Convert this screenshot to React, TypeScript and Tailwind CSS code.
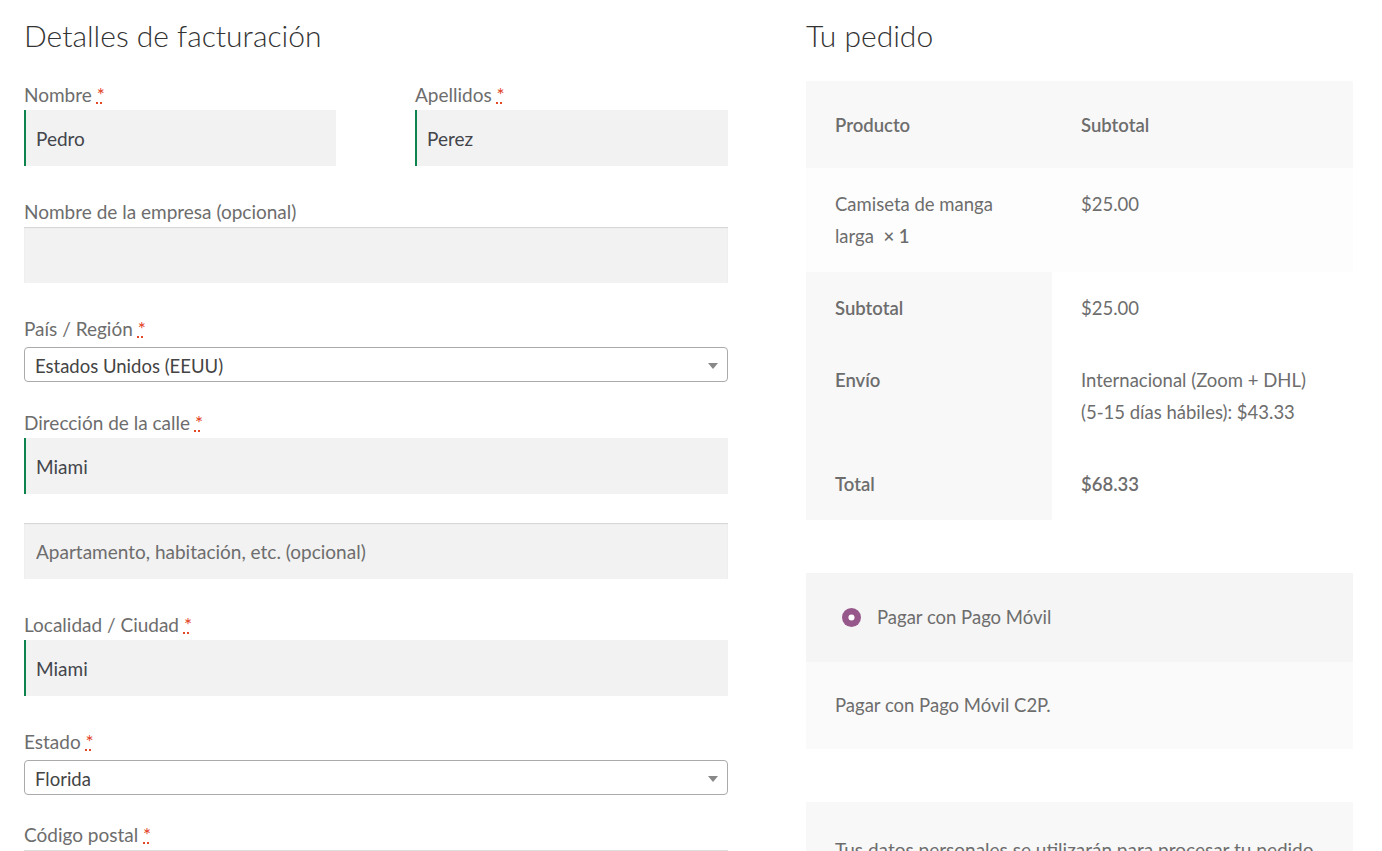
import React from "react"

function Req() {
  return (
    <abbr title="obligatorio" className="text-[#e2401c] [text-decoration-color:#e2401c]">
      *
    </abbr>
  )
}

function Label({ children, required = true }: { children: React.ReactNode; required?: boolean }) {
  return (
    <label className="block text-[19px] leading-[29px] text-[#6d6d6d]">
      {children} {required && <Req />}
    </label>
  )
}

function TextField({ value, placeholder, valid }: { value?: string; placeholder?: string; valid?: boolean }) {
  return (
    <input
      type="text"
      defaultValue={value}
      placeholder={placeholder}
      className={`block w-full h-[56px] bg-[#f2f2f2] pl-3 text-[19px] text-[#43454b] placeholder:text-[#6d6d6d] outline-none ${
        valid ? "shadow-[inset_2px_0_0_#0f834d]" : "shadow-[inset_0_1px_1px_rgba(0,0,0,0.125)]"
      }`}
    />
  )
}

function SelectBox({ value }: { value: string }) {
  return (
    <div className="relative flex items-center h-[35px] border border-[#aaa] rounded-[4px] bg-white pl-[10px] pt-[5px] text-[18.5px] text-[#444]">
      {value}
      <span className="absolute right-[9px] top-[15px] w-0 h-0 border-x-[5px] border-x-transparent border-t-[6px] border-t-[#888]" />
    </div>
  )
}

export default function App() {
  return (
    <div className="h-[851px] overflow-hidden bg-white font-['Lato','Liberation_Sans',sans-serif] pl-6 pt-[14px] flex gap-[78px]">
      {/* billing */}
      <div className="w-[704px] shrink-0">
        <h3 className="text-[30px] leading-[42px] font-light text-[#333] mb-6">Detalles de facturación</h3>

        <div className="flex justify-between">
          <div className="w-[312px]">
            <Label>Nombre</Label>
            <div className="mt-px">
              <TextField value="Pedro" valid />
            </div>
          </div>
          <div className="w-[313px]">
            <Label>Apellidos</Label>
            <div className="mt-px">
              <TextField value="Perez" valid />
            </div>
          </div>
        </div>

        <div className="mt-[31px]">
          <Label required={false}>Nombre de la empresa (opcional)</Label>
          <div className="mt-px">
            <TextField />
          </div>
        </div>

        <div className="mt-[31px]">
          <Label>País / Región</Label>
          <div className="mt-[4px]">
            <SelectBox value="Estados Unidos (EEUU)" />
          </div>
        </div>

        <div className="mt-[26px]">
          <Label>Dirección de la calle</Label>
          <div className="mt-px">
            <TextField value="Miami" valid />
          </div>
          <div className="mt-[29px]">
            <TextField placeholder="Apartamento, habitación, etc. (opcional)" />
          </div>
        </div>

        <div className="mt-[31px]">
          <Label>Localidad / Ciudad</Label>
          <div className="mt-px">
            <TextField value="Miami" valid />
          </div>
        </div>

        <div className="mt-[31px]">
          <Label>Estado</Label>
          <div className="mt-[4px]">
            <SelectBox value="Florida" />
          </div>
        </div>

        <div className="mt-[25px]">
          <Label>Código postal</Label>
          <div className="mt-px border-t border-[#ddd]">
            <TextField />
          </div>
        </div>
      </div>

      {/* order */}
      <div className="w-[547px] shrink-0">
        <h3 className="text-[30px] leading-[42px] font-light text-[#333] mb-[25px]">Tu pedido</h3>

        <table className="w-full border-collapse text-[18.5px] leading-[32px] text-[#6d6d6d]">
          <thead>
            <tr>
              <th className="w-[246px] text-left font-semibold bg-[#f8f8f8] pl-[29px] pt-[28px] pb-[27px]">Producto</th>
              <th className="text-left font-semibold bg-[#f8f8f8] pl-[29px] pt-[28px] pb-[27px]">Subtotal</th>
            </tr>
          </thead>
          <tbody>
            <tr>
              <td className="align-top bg-[#fdfdfd] px-[29px] py-[20px]">
                Camiseta de manga larga&nbsp; <strong className="font-semibold">× 1</strong>
              </td>
              <td className="align-top bg-[#fdfdfd] px-[29px] py-[20px]">$25.00</td>
            </tr>
          </tbody>
          <tfoot>
            <tr>
              <th className="text-left align-top font-semibold bg-[#f8f8f8] px-[29px] py-[20px]">Subtotal</th>
              <td className="align-top px-[29px] py-[20px]">$25.00</td>
            </tr>
            <tr>
              <th className="text-left align-top font-semibold bg-[#f8f8f8] px-[29px] py-[20px]">Envío</th>
              <td className="align-top px-[29px] py-[20px]">Internacional (Zoom + DHL) (5-15 días hábiles): $43.33</td>
            </tr>
            <tr>
              <th className="text-left align-top font-semibold bg-[#f8f8f8] px-[29px] py-[20px]">Total</th>
              <td className="align-top font-semibold px-[29px] py-[20px]">$68.33</td>
            </tr>
          </tfoot>
        </table>

        <div className="mt-[53px] text-[18.5px] text-[#6d6d6d]">
          <div className="h-[89px] bg-[#f5f5f5] flex items-center pl-[36px] gap-[16px]">
            <svg width="19" height="19" viewBox="0 0 20 20" className="shrink-0">
              <circle cx="10" cy="10" r="10" fill="#96588a" />
              <circle cx="10" cy="10" r="3.2" fill="#fff" />
            </svg>
            <span>Pagar con Pago Móvil</span>
          </div>
          <div className="h-[87px] bg-[#fafafa] flex items-center px-[29px]">Pagar con Pago Móvil C2P.</div>

          <div className="mt-[53px] bg-[#f8f8f8] px-[29px] pt-[32px] pb-6 leading-[32px] text-[19px]">
            Tus datos personales se utilizarán para procesar tu pedido, mejorar tu experiencia en esta web y otros
            propósitos descritos en nuestra política de privacidad.
          </div>
        </div>
      </div>
    </div>
  )
}
